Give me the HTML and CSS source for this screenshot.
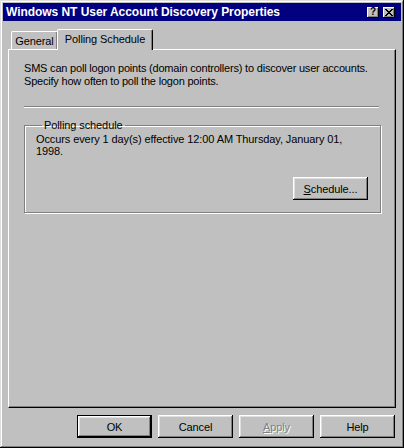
FILE: index.html
```html
<!DOCTYPE html>
<html>
<head>
<meta charset="utf-8">
<link rel="stylesheet" href="styles.css">
</head>
<body>
<div class="window">
  <div class="titlebar">
    <span class="title">Windows NT User Account Discovery Properties</span>
    <div class="caption-buttons">
      <span class="cap-btn help-btn">?</span>
      <span class="cap-btn close-btn">
        <svg width="8" height="7" viewBox="0 0 8 7"><path d="M0 0h2v1h1v1h2v-1h1v-1h2v1h-1v1h-1v1h-1v1h1v1h1v1h1v1h-2v-1h-1v-1h-2v1h-1v1h-2v-1h1v-1h1v-1h1v-1h-1v-1h-1v-1h-1z" fill="#000"/></svg>
      </span>
    </div>
  </div>
  <div class="tabs">
    <div class="tab">General</div>
    <div class="tab active">Polling Schedule</div>
  </div>
  <div class="panel">
    <p class="intro">SMS can poll logon points (domain controllers) to discover user accounts.<br>Specify how often to poll the logon points.</p>
    <div class="separator"></div>
    <fieldset class="group">
      <legend>Polling schedule</legend>
      <p class="occurs">Occurs every 1 day(s) effective 12:00 AM Thursday, January 01,<br>1998.</p>
      <div class="group-actions">
        <button class="btn"><u>S</u>chedule...</button>
      </div>
    </fieldset>
  </div>
  <div class="footer">
    <button class="btn default">OK</button>
    <button class="btn">Cancel</button>
    <button class="btn disabled"><u>A</u>pply</button>
    <button class="btn">Help</button>
  </div>
</div>
</body>
</html>
```
FILE: styles.css
```css
* { box-sizing: border-box; }
html, body { margin: 0; padding: 0; background: #c0c0c0; }
body {
  font-family: "Liberation Sans", Arial, sans-serif;
  font-size: 11px;
  color: #000;
}
.window {
  width: 404px;
  height: 448px;
  background: #c0c0c0;
  padding: 3px;
  display: flex;
  flex-direction: column;
  box-shadow: inset -1px -1px #000, inset 1px 1px #dfdfdf, inset -2px -2px #808080, inset 2px 2px #fff;
}
.titlebar {
  height: 18px;
  background: #000080;
  display: flex;
  align-items: center;
  justify-content: space-between;
  padding: 0 6px 0 3px;
}
.title {
  color: #fff;
  font-weight: bold;
  font-size: 12px;
  letter-spacing: -0.05px;
  white-space: nowrap;
}
.caption-buttons { display: flex; gap: 4px; }
.cap-btn {
  width: 12px;
  height: 11px;
  background: #c0c0c0;
  display: flex;
  align-items: center;
  justify-content: center;
  box-shadow: inset -1px -1px #000, inset 1px 1px #fff, inset -2px -2px #808080;
  font-weight: bold;
  font-size: 10px;
  line-height: 1;
}
.tabs {
  display: flex;
  align-items: flex-end;
  height: 20px;
  margin: 8px 5px 0 8px;
  position: relative;
  z-index: 1;
}
.tab {
  height: 18px;
  padding: 0 6px;
  display: flex;
  align-items: center;
  border-top: 1px solid #fff;
  border-left: 1px solid #fff;
  border-right: 1px solid #000;
  box-shadow: inset -1px 0 #808080;
  border-radius: 2px 2px 0 0;
  background: #c0c0c0;
  width: 47px;
  justify-content: center;
  letter-spacing: -0.1px;
}
.tab.active {
  height: 21px;
  margin-bottom: -1px;
  margin-left: -1px;
  width: 96px;
  padding-bottom: 3px;
}
.panel {
  margin: 0 5px 0 5px;
  height: 359px;
  border-top: 1px solid #fff;
  border-left: 1px solid #fff;
  border-right: 1px solid #000;
  border-bottom: 1px solid #000;
  box-shadow: inset -1px -1px #808080;
  padding: 12px 14px 0 15px;
  letter-spacing: -0.1px;
}
.intro {
  margin: 0;
  line-height: 13px;
  white-space: nowrap;
  letter-spacing: -0.2px;
}
.separator {
  margin: 18px 2px 0 0;
  height: 2px;
  border-top: 1px solid #808080;
  border-bottom: 1px solid #fff;
}
.group {
  margin: 11px 0 0 0;
  padding: 0 12px 12px 11px;
  border: 1px solid #808080;
  box-shadow: inset 1px 1px #fff, 1px 1px #fff;
  min-width: 0;
}
.group legend {
  padding: 0 2px;
  margin-left: 6px;
  line-height: 13px;
}
.occurs {
  margin: 1px 0 0 0;
  line-height: 12px;
  white-space: nowrap;
}
.group-actions {
  display: flex;
  justify-content: flex-end;
  margin-top: 20px;
}
.btn {
  width: 75px;
  height: 23px;
  font-family: "Liberation Sans", Arial, sans-serif;
  font-size: 11px;
  color: #000;
  background: #c0c0c0;
  border: none;
  padding: 0;
  letter-spacing: -0.1px;
  box-shadow: inset -1px -1px #000, inset 1px 1px #fff, inset -2px -2px #808080, inset 2px 2px #dfdfdf;
}
.btn.default {
  box-shadow: inset 0 0 0 1px #000, inset -2px -2px #000, inset 2px 2px #fff, inset -3px -3px #808080, inset 3px 3px #dfdfdf;
}
.btn.disabled {
  color: #808080;
  text-shadow: 1px 1px #fff;
}
.footer {
  display: flex;
  justify-content: flex-end;
  gap: 6px;
  margin-top: 7px;
  padding-right: 6px;
}
```
